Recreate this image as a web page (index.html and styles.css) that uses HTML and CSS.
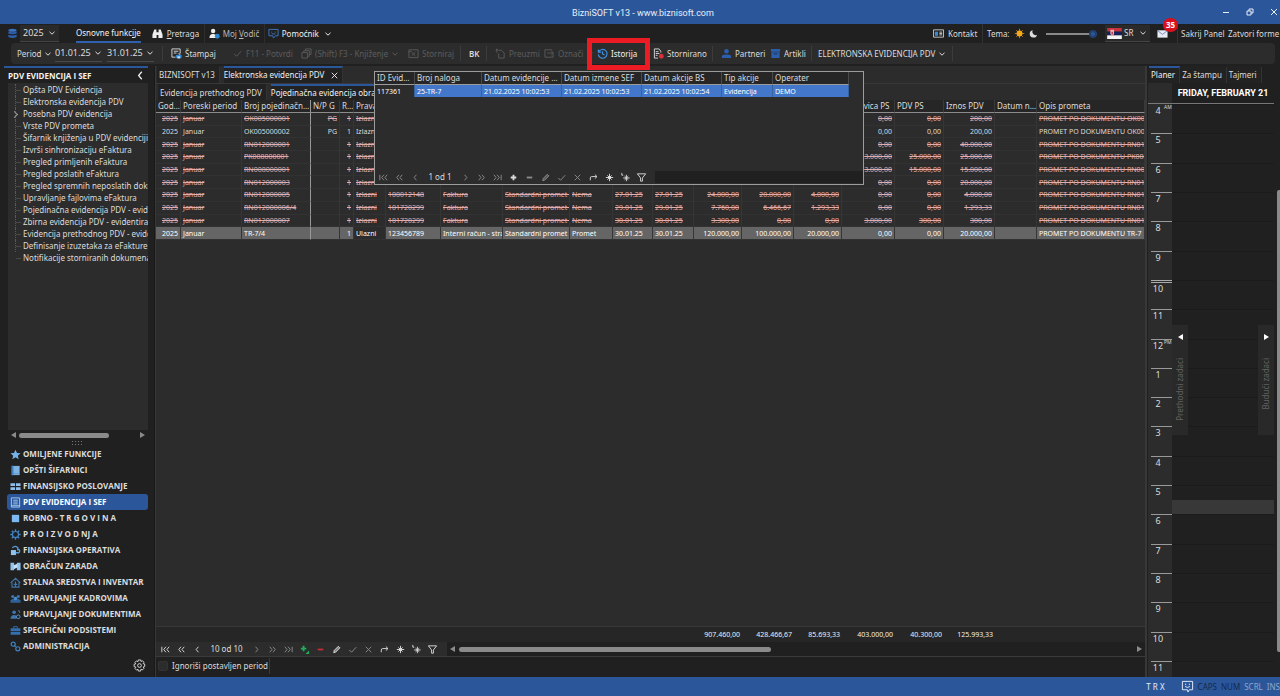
FILE: index.html
```html
<!DOCTYPE html>
<html lang="sr-Latn">
<head>
<meta charset="utf-8">
<title>BizniSOFT v13</title>
<link rel="stylesheet" href="styles.css">
</head>
<body>
<svg class="defs" aria-hidden="true">
  <symbol id="chev" viewBox="0 0 8 8"><path d="M1.500 2.800 4 5.200 6.500 2.800" class="ln"/></symbol>
  <symbol id="n-first" viewBox="0 0 12 12"><path d="M2 3v6M6.500 3 4 6l2.500 3M10 3 7.500 6 10 9" class="ln"/></symbol>
  <symbol id="n-pp" viewBox="0 0 12 12"><path d="M5.500 3 3 6l2.500 3M9 3 6.500 6 9 9" class="ln"/></symbol>
  <symbol id="n-prev" viewBox="0 0 12 12"><path d="M7 3 4.500 6 7 9" class="ln"/></symbol>
  <symbol id="n-next" viewBox="0 0 12 12"><path d="M5 3 7.500 6 5 9" class="ln"/></symbol>
  <symbol id="n-np" viewBox="0 0 12 12"><path d="M3 3 5.500 6 3 9M6.500 3 9 6 6.500 9" class="ln"/></symbol>
  <symbol id="n-last" viewBox="0 0 12 12"><path d="M2 3 4.500 6 2 9M5.500 3 8 6 5.500 9M10 3v6" class="ln"/></symbol>
  <symbol id="n-add" viewBox="0 0 12 12"><path d="M6 3v6M3 6h6" class="ln thick"/></symbol>
  <symbol id="n-add-green" viewBox="0 0 12 12"><path d="M5 2v6M2 5h6" class="ln thick"/><path d="M11 7v4H7z" fill="currentColor"/></symbol>
  <symbol id="n-del" viewBox="0 0 12 12"><path d="M3 6h6" class="ln thick"/></symbol>
  <symbol id="n-edit" viewBox="0 0 12 12"><path d="M3 9.500 3.500 7 8 2.500 9.700 4.200 5.200 8.800z" fill="currentColor" fill-opacity=".5" stroke="currentColor"/></symbol>
  <symbol id="n-ok" viewBox="0 0 12 12"><path d="M2.500 6.500 5 9l5-5.500" class="ln"/></symbol>
  <symbol id="n-x" viewBox="0 0 12 12"><path d="m3 3 6 6M9 3 3 9" class="ln"/></symbol>
  <symbol id="n-ref" viewBox="0 0 12 12"><path d="M2.500 9V6.500Q2.500 5 4 5h5.500M7.500 2.800 9.800 5 7.500 7.200" class="ln"/></symbol>
  <symbol id="n-star" viewBox="0 0 12 12"><path d="M6 2v8M2 6h8M3.700 3.700l4.600 4.600M8.300 3.700 3.700 8.300" class="ln"/><circle cx="6" cy="6" r="2" fill="currentColor"/></symbol>
  <symbol id="n-star2" viewBox="0 0 12 12"><path d="M7 3v7M3.500 6.500h7M5 4.500l4 4M9 4.500l-4 4M2 1v2.500h1.500" class="ln"/></symbol>
  <symbol id="n-filter" viewBox="0 0 12 12"><path d="M1.500 2h9L7 6.500V10H5V6.500z" class="ln"/></symbol>

  <symbol id="db" viewBox="0 0 12 12"><ellipse cx="6" cy="2.500" rx="4.500" ry="1.700" fill="#3a72c4"/><path d="M1.500 3.800q4.500 1.800 9 0V6q-4.500 1.800-9 0zM1.500 7.300q4.500 1.800 9 0v2.500q-4.500 2-9 0z" fill="#2b5fae"/></symbol>
  <symbol id="bino" viewBox="0 0 12 12"><path d="M2.500 1.500h2.300v3h2.400v-3h2.300L11.500 7v4H7V7.500H5V11H.5V7z" fill="#eee"/></symbol>
  <symbol id="guide" viewBox="0 0 12 12"><circle cx="4.500" cy="3.200" r="2.400" fill="#eee"/><path d="M.5 11c0-4 2-4.500 4-4.500S8 7 8 11z" fill="#eee"/><circle cx="9" cy="9" r="2.700" fill="#2f86d0"/></symbol>
  <symbol id="help" viewBox="0 0 12 12"><path d="M1 1.500h10v7H8L6 11 5 8.500H1z" fill="none" stroke="#3f7ac8"/><path d="M4 4v1M8 4v1M4 6.500h4" stroke="#3f7ac8"/></symbol>
  <symbol id="contact" viewBox="0 0 12 12"><path d="M.5 2h11v8H.5z" fill="none" stroke="#ccc"/><path d="M2 4h3.500v4.500H2z" fill="#3f86d0"/><path d="M7 4.500h3M7 6h3M7 7.500h3" stroke="#ccc"/></symbol>
  <symbol id="sun" viewBox="0 0 12 12"><circle cx="6" cy="6" r="3.200" fill="#f5a81c"/><path d="M6 .8v10.400M.8 6h10.400M2.400 2.400l7.200 7.200M9.600 2.400 2.400 9.600" stroke="#f5a81c" stroke-width=".7"/></symbol>
  <symbol id="moon" viewBox="0 0 12 12"><path d="M5 1.500A5 5 0 1 0 10.800 7.500 4.300 4.300 0 0 1 5 1.500z" fill="#ddd"/></symbol>
  <symbol id="flag" viewBox="0 0 16 12"><path fill="#c8313e" d="M0 0h16v4H0z"/><path fill="#14215c" d="M0 4h16v4H0z"/><path fill="#f4f4f4" d="M0 8h16v4H0z"/><path fill="#e8b7bb" d="M3.500 2h4v4.500l-2 2.500-2-2.500z"/><path fill="#c8313e" d="M4.700 4h1.600v3H4.700z"/></symbol>
  <symbol id="mail" viewBox="0 0 12 12"><path d="M.5 2.500h11v8H.5z" fill="#e8eaf4"/><path d="m.8 3 5.200 4 5.200-4" fill="none" stroke="#7488b8"/></symbol>

  <symbol id="print" viewBox="0 0 12 12"><path d="M1 1h9v5M1 1v9h4M3 3.500h5M3 5.500h3" class="ln"/><path d="M5.500 7.500h6V11h-6z" fill="#2f86d0"/><path d="M7 6h3v1.500M7 9h3v2.500H7z" fill="#bde" /></symbol>
  <symbol id="copy" viewBox="0 0 12 12"><path d="M1 5h6v6H1zM3 5V3h6v6H7M5 3V1h6v6H9" class="ln"/></symbol>
  <symbol id="storn" viewBox="0 0 12 12"><path d="M1 2h10v8.500H1zM1 4h3M4 4.500l4 4M8 4.500l-4 4" class="ln"/></symbol>
  <symbol id="take" viewBox="0 0 12 12"><path d="M2 1v4M4 2.500h3l3 3V11H4V6M1 3l1-2 1.500 2" class="ln"/></symbol>
  <symbol id="mark" viewBox="0 0 12 12"><path d="M9 2H1v8h9V7M3.500 5.500h6M8 3.500l2.500 2L8 7.500" class="ln"/></symbol>
  <symbol id="hist" viewBox="0 0 12 12"><path d="M1.500 1.500V4.500h3M1.800 4.300A4.800 4.800 0 1 1 1.400 7M6 3.500V6.500l2.200 1" fill="none" stroke="#3c8fe0" stroke-width="1.300"/></symbol>
  <symbol id="stdoc" viewBox="0 0 12 12"><path d="M8.500 5V3.500L6.500 1H1.500v10h4M3 4h3M3 6h4M3 8h2" class="ln"/><circle cx="9" cy="9" r="2.700" fill="#d8303a"/></symbol>
  <symbol id="person" viewBox="0 0 12 12"><circle cx="6" cy="3.500" r="2.500" fill="#2b5fae"/><path d="M1 11V8.500q1-1.500 5-1.500t5 1.500V11z" fill="#2b5fae"/></symbol>
  <symbol id="box" viewBox="0 0 12 12"><path d="M1 1h10v3H1zM1.500 4.500h9V11h-9z" fill="#2b5fae"/><path d="M4 6.500h4" stroke="#1c2c48"/></symbol>

  <symbol id="c-star" viewBox="0 0 12 12"><path d="m6 .8 1.600 3.600 3.900.3-3 2.600 1 3.900L6 9.100l-3.500 2.100 1-3.900-3-2.600 3.900-.3z" fill="#74b4ea"/></symbol>
  <symbol id="c-book" viewBox="0 0 12 12"><path d="M2 1h8.500v10H2z" fill="#7fb2e0"/><path d="M2 1h1.500v10H2zM3.500 9.500h7" fill="#3f7fc0" stroke="#4c86c0" stroke-width=".6"/></symbol>
  <symbol id="c-fin" viewBox="0 0 12 12"><path d="M.5 2.500h5v3h-5zM6.500 2.500h5v3h-5zM.5 6.700h5v3h-5zM6.500 6.700h5v3h-5z" fill="#8fbfe8"/></symbol>
  <symbol id="c-pdv" viewBox="0 0 12 12"><path d="M1.500 1h9v10h-9zM3.500 3.500h5M3.500 5.500h5M3.500 7.500h5M1.500 9.500h9" fill="none" stroke="#a9cdf2"/></symbol>
  <symbol id="c-sq" viewBox="0 0 12 12"><path d="M2 2h8v8H2z" fill="#7db9f0"/></symbol>
  <symbol id="c-gear" viewBox="0 0 12 12"><circle cx="6" cy="6" r="3.300" fill="none" stroke="#3f83c4" stroke-width="1.300"/><path d="M6 .3v2.200M6 9.500v2.200M.3 6h2.200M9.500 6h2.200M2 2l1.500 1.500M8.500 8.500 10 10M10 2 8.500 3.500M3.500 8.500 2 10" stroke="#3f83c4" stroke-width="1.500"/></symbol>
  <symbol id="c-op" viewBox="0 0 12 12"><path d="M1 5.500h5.500V11H1z" fill="#8fc2ec"/><path d="M2.500 3Q6 0 8.500 3v3M6.500 8.500h3q2-2 0-4" fill="none" stroke="#5e9fd8" stroke-width="1.500"/></symbol>
  <symbol id="c-pay" viewBox="0 0 12 12"><path d="M.5 2h4v8h-4zM7.500 2h4v8h-4z" fill="#8fc2ec"/><path d="M4 4.500 8 3v4l-4 2z" fill="#c4e0f6"/></symbol>
  <symbol id="c-home" viewBox="0 0 12 12"><path d="M.7 6.500 6 1.500l5.300 5M2.200 6v5h7.600V6M6 5v6M4 8h4" fill="none" stroke="#3f76ac" stroke-width="1.200"/></symbol>
  <symbol id="c-ppl" viewBox="0 0 12 12"><path d="M.5 10.500V8L2.500 6.500h7l2 1.500v2.500z" fill="#2e6198"/><circle cx="3" cy="3.800" r="1.700" fill="#3f76ac"/><circle cx="9" cy="3.800" r="1.700" fill="#3f76ac"/><circle cx="6" cy="6" r="1.900" fill="#4c8ccc"/></symbol>
  <symbol id="c-doc" viewBox="0 0 12 12"><circle cx="4.500" cy="3.500" r="2" fill="#3f76ac"/><path d="M.5 10.500Q1 6.500 4.500 6.500T7 10.500z" fill="#3f76ac"/><circle cx="9" cy="8.500" r="2" fill="none" stroke="#5a9ad8"/><path d="M8.500 2h2v2.500" fill="none" stroke="#3f76ac"/></symbol>
  <symbol id="c-case" viewBox="0 0 12 12"><path d="M.7 3.500h10.600v3H.7zM.7 7.300h10.600v3.200H.7z" fill="#3470b0"/><path d="M4 3.500V1.800h4v1.700" fill="none" stroke="#3470b0"/></symbol>
  <symbol id="c-adm" viewBox="0 0 12 12"><circle cx="3.500" cy="3.500" r="2.200" fill="none" stroke="#3f83c4" stroke-width="1.300"/><circle cx="8.500" cy="8.500" r="2.200" fill="none" stroke="#3f83c4" stroke-width="1.300"/><path d="m5 5 2 2" stroke="#3f83c4"/></symbol>
  <symbol id="gear" viewBox="0 0 14 14"><path d="M5.800 1h2.400l.4 1.700 1.500-.9 1.700 1.700-.9 1.500 1.700.4v2.800l-1.700.4.9 1.500-1.700 1.700-1.500-.9L8.200 13H5.800l-.4-1.900-1.500.9-1.700-1.700.9-1.500L1.200 8.200V5.600L3 5.200l-.9-1.500L3.800 2l1.500.9z" class="ln"/><circle cx="7" cy="7" r="2" class="ln"/></symbol>
  <symbol id="chat" viewBox="0 0 14 14"><path d="M1.500 1.500h11v9H9L7.500 13 7 10.500H1.500z" class="ln"/><path d="M5 4v1.500M9 4v1.500M4.500 7q2.500 2 5 0" class="ln"/></symbol>
</svg>

<header class="titlebar">
  <h1>BizniSOFT v13 - www.biznisoft.com</h1>
  <div class="winbtns">
    <button aria-label="Minimize"><svg viewBox="0 0 8 8"><path d="M1 4.500h6" class="ln"/></svg></button>
    <button aria-label="Restore"><svg viewBox="0 0 8 8"><path d="M1 3h4v4H1zM3 3V1h4v4H5" class="ln"/></svg></button>
    <button aria-label="Close"><svg viewBox="0 0 8 8"><path d="m1 1 6 6M7 1 1 7" class="ln"/></svg></button>
  </div>
</header>

<nav class="menubar">
  <svg class="ic"><use href="#db"/></svg>
  <button class="year">2025<svg class="cv"><use href="#chev"/></svg></button>
  <button class="current">Osnovne funkc<u>i</u>je</button>
  <button class="m-search"><svg class="ic"><use href="#bino"/></svg><span><u>P</u>retraga</span></button>
  <button class="m-guide"><svg class="ic"><use href="#guide"/></svg><span>Moj <u>V</u>odič</span></button>
  <button class="m-help"><svg class="ic"><use href="#help"/></svg><span>Pomoćnik</span><svg class="cv"><use href="#chev"/></svg></button>
  <span class="push"></span>
  <button class="m-contact"><svg class="ic"><use href="#contact"/></svg><span>Kontakt</span></button>
  <label class="m-theme" for="theme">Tema:<svg class="ic"><use href="#sun"/></svg><svg class="ic moon"><use href="#moon"/></svg></label>
  <input id="theme" type="range" min="0" max="1" value="1">
  <button class="lang"><svg class="flag"><use href="#flag"/></svg>SR<svg class="cv"><use href="#chev"/></svg></button>
  <button class="mail" aria-label="Poruke"><svg class="ic"><use href="#mail"/></svg><span class="badge">35</span></button>
  <button class="m-hide">Sakrij Panel</button>
  <button class="m-close">Zatvori forme</button>
</nav>

<div class="toolbar">
  <button class="t-period">Period<svg class="cv"><use href="#chev"/></svg></button>
  <button class="t-date">01.01.25<svg class="cv"><use href="#chev"/></svg></button>
  <button class="t-date">31.01.25<svg class="cv"><use href="#chev"/></svg></button>
  <i class="sep wide"></i>
  <button class="t-print"><svg class="ic"><use href="#print"/></svg>Štampaj</button>
  <button class="t-confirm" disabled><svg class="ic"><use href="#n-ok"/></svg>F11 - Potvrdi</button>
  <button class="t-book" disabled><svg class="ic"><use href="#copy"/></svg>(Shift) F3 - Knjiženje<svg class="cv"><use href="#chev"/></svg></button>
  <button class="t-storn" disabled><svg class="ic"><use href="#storn"/></svg>Storniraj</button>
  <i class="sep"></i>
  <button class="t-bk">BK</button>
  <i class="sep"></i>
  <button class="t-take" disabled><svg class="ic"><use href="#take"/></svg>Preuzmi</button>
  <button class="t-mark" disabled><svg class="ic"><use href="#mark"/></svg>Označi<svg class="cv"><use href="#chev"/></svg></button>
  <button class="t-hist"><svg class="ic"><use href="#hist"/></svg>Istorija<span class="highlight"></span></button>
  <button class="t-stdoc"><svg class="ic"><use href="#stdoc"/></svg>Stornirano</button>
  <i class="sep"></i>
  <button class="t-part"><svg class="ic"><use href="#person"/></svg>Partneri</button>
  <button class="t-art"><svg class="ic"><use href="#box"/></svg>Artikli</button>
  <i class="sep short"></i>
  <button class="t-evid">ELEKTRONSKA EVIDENCIJA PDV<svg class="cv"><use href="#chev"/></svg></button>
  <i class="sep"></i>
</div>

<div class="workspace">
  <aside class="side">
    <div class="side-head"><h2>PDV EVIDENCIJA I SEF</h2><button aria-label="Sakrij"><svg class="ic"><use href="#n-prev"/></svg></button></div>
    <ul class="tree">
      <li><a href="#">Opšta PDV Evidencija</a></li>
      <li><a href="#">Elektronska evidencija PDV</a></li>
      <li class="parent"><a href="#">Posebna PDV evidencija</a></li>
      <li><a href="#">Vrste PDV prometa</a></li>
      <li><a href="#">Šifarnik knjiženja u PDV evidenciji</a></li>
      <li><a href="#">Izvrši sinhronizaciju eFaktura</a></li>
      <li><a href="#">Pregled primljenih eFaktura</a></li>
      <li><a href="#">Pregled poslatih eFaktura</a></li>
      <li><a href="#">Pregled spremnih neposlatih dokumenata</a></li>
      <li><a href="#">Upravljanje fajlovima eFaktura</a></li>
      <li><a href="#">Pojedinačna evidencija PDV - evidentiranje</a></li>
      <li><a href="#">Zbirna evidencija PDV - evidentiranje</a></li>
      <li><a href="#">Evidencija prethodnog PDV - evidentiranje</a></li>
      <li><a href="#">Definisanje izuzetaka za eFakture</a></li>
      <li><a href="#">Notifikacije storniranih dokumenata</a></li>
    </ul>
    <div class="hscroll"><i class="arr left"></i><i class="thumb"></i><i class="arr right"></i></div>
    <div class="grip"></div>
    <nav class="groups">
      <a href="#"><svg class="ic"><use href="#c-star"/></svg>OMILJENE FUNKCIJE</a>
      <a href="#"><svg class="ic"><use href="#c-book"/></svg>OPŠTI ŠIFARNICI</a>
      <a href="#"><svg class="ic"><use href="#c-fin"/></svg>FINANSIJSKO POSLOVANJE</a>
      <a href="#" class="on"><svg class="ic"><use href="#c-pdv"/></svg>PDV EVIDENCIJA I SEF</a>
      <a href="#"><svg class="ic"><use href="#c-sq"/></svg>ROBNO - T R G O V I N A</a>
      <a href="#"><svg class="ic"><use href="#c-gear"/></svg>P R O I Z V O D NJ A</a>
      <a href="#"><svg class="ic"><use href="#c-op"/></svg>FINANSIJSKA OPERATIVA</a>
      <a href="#"><svg class="ic"><use href="#c-pay"/></svg>OBRAČUN ZARADA</a>
      <a href="#"><svg class="ic"><use href="#c-home"/></svg>STALNA SREDSTVA I INVENTAR</a>
      <a href="#"><svg class="ic"><use href="#c-ppl"/></svg>UPRAVLJANJE KADROVIMA</a>
      <a href="#"><svg class="ic"><use href="#c-doc"/></svg>UPRAVLJANJE DOKUMENTIMA</a>
      <a href="#"><svg class="ic"><use href="#c-case"/></svg>SPECIFIČNI PODSISTEMI</a>
      <a href="#"><svg class="ic"><use href="#c-adm"/></svg>ADMINISTRACIJA</a>
    </nav>
    <div class="side-foot"><button aria-label="Podešavanja"><svg class="gear"><use href="#gear"/></svg></button></div>
  </aside>

  <main class="center">
    <div class="tabs">
      <button>BIZNISOFT v13</button>
      <button class="on">Elektronska evidencija PDV<svg class="ic"><use href="#n-x"/></svg></button>
    </div>
    <div class="tabs sub">
      <button>Evidencija prethodnog PDV</button>
      <button class="on">Pojedinačna evidencija obračunatog PDV</button>
    </div>
    <div class="gridwrap">
      <table class="grid">
        <colgroup class="cols"></colgroup>
        <thead><tr><th>Godina</th><th>Poreski period</th><th>Broj pojedinačne evidencije</th><th>N/P G</th><th>R...</th><th>Pravac</th><th></th><th></th><th></th><th></th><th></th><th></th><th></th><th></th><th></th><th>Osnovica PS</th><th>PDV PS</th><th>Iznos PDV</th><th>Datum naloga</th><th>Opis prometa</th></tr></thead>
        <tbody id="rows"></tbody>
      </table>
    </div>
    <table class="grid totals">
      <colgroup class="cols"></colgroup>
      <tbody><tr><td colspan="12"></td><td>907.460,00</td><td>428.466,67</td><td>85.693,33</td><td>403.000,00</td><td>40.300,00</td><td>125.993,33</td><td colspan="2"></td></tr></tbody>
    </table>
    <div class="navrow">
      <div class="navigator" data-count="10 od 10" data-kind="main"></div>
      <div class="hscroll"><i class="arr left"></i><i class="thumb"></i><i class="arr right"></i></div>
    </div>
    <div class="optrow"><label for="ign"><input type="checkbox" id="ign">Ignoriši postavljen period</label></div>

    <section class="popup">
      <table class="hist">
        <colgroup><col class="h1"><col class="h2"><col class="h3"><col class="h3"><col class="h3"><col class="h4"><col></colgroup>
        <thead><tr><th>ID Evidencije</th><th>Broj naloga</th><th>Datum evidencije BS</th><th>Datum izmene SEF</th><th>Datum akcije BS</th><th>Tip akcije</th><th>Operater</th></tr></thead>
        <tbody><tr><td>117361</td><td>25-TR-7</td><td>21.02.2025 10:02:53</td><td>21.02.2025 10:02:53</td><td>21.02.2025 10:02:54</td><td>Evidencija</td><td>DEMO</td></tr></tbody>
      </table>
      <div class="navrow">
        <div class="navigator" data-count="1 od 1" data-kind="popup"></div>
        <div class="hscroll"></div>
      </div>
    </section>
  </main>

  <aside class="planner">
    <div class="tabs">
      <button class="on">Planer</button>
      <button>Za štampu</button>
      <button>Tajmeri</button>
    </div>
    <div class="cal">
      <div class="day">FRIDAY, FEBRUARY 21</div>
      <div class="hours" id="hours"></div>
      <button class="edge prev"><i class="arr left"></i><span>Prethodni zadaci</span></button>
      <button class="edge next"><i class="arr right"></i><span>Budući zadaci</span></button>
      <div class="vscroll"><i></i></div>
    </div>
  </aside>
</div>

<footer class="status">
  <span class="trx">T R X</span>
  <svg class="gear"><use href="#chat"/></svg>
  <span class="dark">CAPS</span><span class="dark">NUM</span><span>SCRL</span><span>INS</span>
</footer>
<script src="app.js"></script>
</body>
</html>
```
FILE: styles.css
```css
* { box-sizing: border-box; }
body {
  margin: 0; height: 100vh; overflow: hidden;
  display: flex; flex-direction: column;
  background: #202020; color: #dcdcdc;
  font: 8px/12px "Noto Sans", "Open Sans", sans-serif;
}
button { font: inherit; color: inherit; background: none; border: 0; padding: 0; margin: 0; display: flex; align-items: center; white-space: nowrap; text-align: left; }
a { color: inherit; text-decoration: none; }
h1, h2 { font: inherit; margin: 0; }
ul { list-style: none; margin: 0; padding: 0; }
svg { flex: none; }
.defs { position: absolute; width: 0; height: 0; }
.ln { fill: none; stroke: currentColor; stroke-width: 1; }
.thick { stroke-width: 2; }
.ic { width: 11px; height: 11px; }
.cv { width: 8px; height: 8px; }

.titlebar { flex: 0 0 24px; background: #2b579a; display: grid; grid-template-columns: 1fr auto 1fr; align-items: center; padding-left: 6px; color: #e8eef8; }
.titlebar h1 { grid-column: 2; font-family: Roboto, sans-serif; font-size: 9px; padding-top: 2px; }
.winbtns { justify-self: end; display: flex; gap: 16px; padding-right: 2px; }
.winbtns svg { width: 8px; height: 8px; }

.menubar { flex: 0 0 19px; display: flex; align-items: center; padding-left: 7px; }
.menubar button, .menubar label { height: 19px; gap: 4px; }
.menubar u { text-underline-offset: 1px; }
.menubar .year { width: 39px; height: 17px; margin-left: 2px; padding-left: 3px; justify-content: space-between; padding-right: 3px; background: #2a2a2a; border-bottom: 1px solid #444; font-size: 9px; }
.menubar .current { margin: 0 11px 0 17px; gap: 0; border-bottom: 2px solid #2f62ae; color: #f2f2f2; }
.menubar .m-search { width: 52px; }
.menubar .m-guide { width: 60px; padding-left: 4px; gap: 3px; border-left: 1px solid #2e2e2e; color: #b8b8b8; }
.menubar .m-help { padding-left: 3px; gap: 3px; border-left: 1px solid #2e2e2e; color: #f2f2f2; }
.m-help .cv { margin-left: 2px; }
.push { flex: 1; }
.m-contact { width: 49px; }
.m-theme { width: 64px; display: flex; align-items: center; padding-left: 4px; border-left: 1px solid #333; }
.m-theme .moon { width: 9px; height: 9px; }
#theme { appearance: none; width: 51px; height: 8px; margin: 0 8px 0 0; background: linear-gradient(#8a8a8a, #8a8a8a) center / 100% 2px no-repeat; }
#theme::-webkit-slider-thumb { appearance: none; width: 8px; height: 8px; border-radius: 50%; background: #2b579a; border: 2px solid #22406e; }
.menubar .lang { width: 45px; height: 17px; gap: 2px; padding: 0 3px 0 2px; background: #2a2a2a; border-bottom: 1px solid #444; }
.lang .cv { margin-left: auto; }
.flag { width: 15px; height: 11px; }
.mail { position: relative; width: 27px; padding-left: 7px; }
.badge { position: absolute; left: 13px; top: -6px; width: 15px; height: 14px; border-radius: 7px; background: #d8101c; color: #fff; font: bold 8px/14px "Open Sans", sans-serif; text-align: center; }
.m-hide { width: 51px; padding-left: 3px; border-left: 1px solid #333; }
.m-close { width: 52px; }

.toolbar { flex: 0 0 21px; margin: 0 5px 0 11px; padding-left: 6px; background: #2c2c2c; border-radius: 4px; display: flex; align-items: center; }
.toolbar button { height: 16px; flex: none; gap: 3px; }
.toolbar button:disabled { color: #5c5c5c; }
.toolbar .t-period { width: 38px; }
.toolbar .t-date { width: 47px; margin-right: 5px; border-bottom: 1px solid #4a4a4a; font-size: 9px; }
.sep { flex: 0 0 9px; height: 15px; border-left: 1px solid #3c3c3c; }
.sep.wide { margin-left: 3px; }
.sep.short { flex-basis: 7px; }
.t-print { width: 61px; }
.t-confirm { width: 69px; }
.t-book { width: 107px; }
.t-storn { width: 52px; }
.t-bk { width: 17px; font-weight: 600; }
.t-take { width: 49px; }
.t-mark { width: 53px; }
.t-hist { width: 56px; position: relative; color: #f2f2f2; }
.highlight { position: absolute; left: -10px; top: -8px; width: 63px; height: 32px; border: 5px solid #ed1c24; z-index: 5; }
.t-stdoc { width: 59px; }
.t-part { width: 49px; }
.t-art { width: 41px; }
.t-evid { width: 134px; }

.workspace { flex: 1; min-height: 0; display: grid; grid-template-columns: 155px minmax(0, 1fr) 133px; padding-top: 2px; }
.side { display: flex; flex-direction: column; min-height: 0; padding: 0 6px 0 4px; border-right: 1px solid #191919; }
.side-head { flex: 0 0 17px; display: flex; align-items: center; justify-content: space-between; padding-left: 4px; border-top: 2px solid #2b579a; color: #f2f2f2; font-family: "Open Sans", sans-serif; font-weight: bold; }
.side-head .ic { width: 15px; height: 15px; }
.tree { flex: 1; min-height: 0; margin-left: 4px; background: #2c2c2c; overflow: hidden; padding-top: 1px; }
.tree li { height: 12px; margin-left: 7px; padding-left: 7px; white-space: nowrap; border-left: 1px dotted #5a5a5a; background: linear-gradient(#484848, #484848) 0 6px / 5px 1px no-repeat; }
.tree li:last-child { border-color: transparent; }
.tree .parent { position: relative; background: none; }
.tree .parent::before { content: ""; position: absolute; left: -4px; top: 4px; width: 4px; height: 4px; border: solid #999; border-width: 1px 1px 0 0; transform: rotate(45deg); }
.hscroll { display: flex; align-items: center; height: 10px; }
.arr { width: 0; height: 0; border: 3px solid transparent; }
.arr.left { border-left: 0; border-right: 5px solid #8a8a8a; }
.arr.right { border-right: 0; border-left: 5px solid #8a8a8a; }
.thumb { height: 5px; border-radius: 3px; background: #8a8a8a; }
.side .hscroll { margin-left: 4px; padding: 0 3px; }
.side .thumb { flex: 0 0 90px; margin: 0 auto 0 3px; }
.grip { flex: 0 0 6px; align-self: center; width: 11px; background: radial-gradient(circle, #999 40%, transparent 45%) 0 0 / 3px 3px; opacity: .7; }
.groups { margin-left: 3px; }
.groups a { display: flex; align-items: center; gap: 2px; height: 16px; padding-left: 3px; border-radius: 3px; font-family: "Open Sans", sans-serif; font-weight: bold; white-space: nowrap; }
.groups .on { background: #2b579a; color: #fff; }
.side-foot { flex: 0 0 23px; display: flex; align-items: center; justify-content: flex-end; padding-right: 2px; }
.gear { width: 13px; height: 13px; }

.tabs { display: flex; flex: 0 0 17px; padding-left: 1px; }
.tabs button { height: 17px; padding: 0 4px 1px 2px; background: #222; border-right: 1px solid #333; border-top: 2px solid transparent; }
.tabs .on { border-top-color: #2b579a; color: #f0f0f0; }
.center { position: relative; min-width: 0; display: flex; flex-direction: column; background: #2c2c2c; border-left: 1px solid #383838; border-right: 2px solid #383838; }
.center .tabs .on { margin-left: 4px; padding: 0 2px 1px 0; }
.center .tabs .ic { margin-left: 5px; }
.center .sub { flex-basis: 17px; border-top: 1px solid #383838; padding-left: 2px; }
.center .sub button { height: 16px; }
.gridwrap { flex: 1; min-height: 0; overflow: hidden; }
.grid { width: 100%; table-layout: fixed; border-collapse: separate; border-spacing: 0; font-size: 7px; }
.grid:not(.totals) { height: 140px; }
.grid th, .grid td, .hist th, .hist td { padding: 0 2px; overflow: hidden; white-space: nowrap; text-overflow: clip; line-height: 11px; text-align: left; }
.grid th { height: 13px; padding: 0 0 1px 2px; line-height: 10px; font-size: 8px; font-weight: normal; text-overflow: ellipsis; background: #262626; border-right: 1px solid #3a3a3a; border-bottom: 1px solid #8c8c8c; }
.grid td { border-right: 1px solid #363636; border-bottom: 1px solid #323232; }
.grid tbody .r { text-align: right; }
.grid tbody td:nth-child(3), .grid th:nth-child(3) { border-right-color: #999; }
.grid .void td { color: #e4adad; text-decoration: line-through; }
.grid .sel td { background: #656565; color: #fff; }
.grid .sel .cursor { background: #2c2c2c; }
.totals { flex: none; font-size: 7px; border-top: 1px solid #383838; background: #262626; }
.totals td { height: 15px; text-align: right; border: 0; color: #f0f0f0; }
.navrow { display: flex; flex: 0 0 14px; }
.navigator { display: flex; align-items: center; }
.navigator button { width: 16px; height: 14px; justify-content: center; }
.navigator svg { width: 11px; height: 11px; }
.navigator .count { text-align: center; width: 43px; }
.center > .navrow .navigator { padding-left: 1px; }
.center > .navrow .hscroll { flex: 1; height: 14px; margin-left: 7px; padding: 0 3px; background: #202020; }
.center > .navrow .thumb { flex: 0 1 312px; margin: 0 auto 0 4px; }
.green { color: #1fae5a; }
.red { color: #c03038; }
.dim { color: #8c8c8c; }
.optrow { flex: 0 0 21px; padding-bottom: 2px; background: #202020; border-top: 1px solid #3a3a3a; display: flex; align-items: center; }
.optrow label { display: flex; align-items: center; gap: 4px; padding: 2px 1px 2px 2px; border-right: 1px solid #3a3a3a; }
.optrow input { appearance: none; width: 10px; height: 10px; margin: 0; background: #2c2c2c; border: 1px solid #333; border-radius: 2px; }

.popup { position: absolute; left: 218px; top: 5px; width: 490px; height: 114px; display: flex; flex-direction: column; justify-content: space-between; background: #2c2c2c; border: 1px solid #9c9c9c; }
.hist { width: 474px; table-layout: fixed; border-collapse: separate; border-spacing: 0; }
.hist th { height: 13px; padding-bottom: 1px; font-weight: normal; text-overflow: ellipsis; border-right: 1px solid #4a4a4a; border-bottom: 1px solid #9c9c9c; background: #262626; }
.hist td { height: 12px; font-size: 7px; background: #4377c9; color: #fff; border-right: 1px solid #35619f; }
.hist td:first-child { background: #2c2c2c; }
.h1 { width: 40px; } .h2 { width: 67px; } .h3 { width: 80px; } .h4 { width: 51px; }
.popup .count { width: 34px; }
.popup .hscroll { flex: 1; height: 12px; margin: 1px 0 0 6px; background: #202020; }

.planner { display: flex; flex-direction: column; min-width: 0; padding-left: 1px; background: #202020; }
.cal { flex: 1; min-height: 0; position: relative; display: flex; flex-direction: column; padding-right: 6px; background: linear-gradient(90deg, #2c2c2c 24px, transparent 24px); }
.day { flex: 0 0 19px; margin-left: 24px; text-align: center; font: bold 9px/20px Roboto, sans-serif; color: #fff; white-space: nowrap; }
.hours { flex: 1; min-height: 0; display: flex; flex-direction: column; border-top: 1px solid #777; }
.hour { flex: 20; min-height: 0; overflow: hidden; display: grid; grid-template-columns: 24px 1fr; }
.hour:last-child { flex: 11; }
.hour > span { display: flex; align-items: flex-start; margin-left: 3px; border-top: 1px solid #999; font-size: 9px; }
.hour:first-child > span { border-top-color: transparent; }
.hour b { flex: none; width: 13px; padding-left: 1px; text-align: center; font-weight: normal; }
.hour sup { font-size: 5px; line-height: 5px; }
.hour.now > span { border-top: 3px double #aaa; }
.slots { display: grid; grid-template-rows: 1fr 1fr; border-top: 1px solid #1b1b1b; }
.slots .picked { background: #383838; }
.edge { position: absolute; top: 242px; width: 16px; height: 110px; background: #292929; flex-direction: column; gap: 18px; padding-top: 9px; color: #626262; }
.edge.prev { left: 24px; }
.edge.next { right: 6px; }
.edge span { writing-mode: vertical-rl; transform: rotate(180deg); }
.edge .arr.left { border-right-color: #fff; }
.edge .arr.right { border-left-color: #fff; }
.vscroll { position: absolute; right: 0; top: 107px; bottom: 25px; width: 3px; }
.vscroll i { display: block; height: 100%; border-radius: 2px 0 0 2px; background: #8a8a8a; }

.status { flex: 0 0 19px; display: flex; align-items: center; justify-content: flex-end; gap: 4px; background: #2b579a; color: #8fa5c8; white-space: nowrap; overflow: hidden; }
.status .trx { color: #e8eef8; margin-right: 12px; }
.status .gear { color: #e8eef8; }
.status .dark { color: #14294c; }
```
FILE: app.js
```js
const widths = [25, 61, 69, 29, 14, 32, 55, 62, 67, 43, 40, 41, 48, 52, 48, 53, 49, 51, 42, 0];
document.querySelectorAll('.cols').forEach(g => {
  g.innerHTML = widths.map(w => w ? `<col width="${w}">` : '<col>').join('');
});

const std = 'Standardni promet - osnovni';
const rows = [
  ['OK005000001', 'PG', 'Izlazni', '', '', '', '', '', '', '', '', '', '0,00', '0,00', '200,00', 'OK005000001'],
  ['OK005000002', 'PG', 'Izlazni', '', '', '', '', '', '', '', '', '', '0,00', '0,00', '200,00', 'OK005000002'],
  ['RN012000001', '', 'Izlazni', '', '', '', '', '', '', '', '', '', '0,00', '0,00', '40.000,00', 'RN012000001'],
  ['PK008000001', '', 'Izlazni', '', '', '', '', '', '', '', '', '', '3.000,00', '25.000,00', '25.000,00', 'PK008000001'],
  ['RN008000001', '', 'Izlazni', '', '', '', '', '', '', '', '', '', '3.000,00', '15.000,00', '15.000,00', 'RN008000001'],
  ['RN012000003', '', 'Izlazni', '', '', '', '', '', '', '', '', '', '0,00', '0,00', '20.000,00', 'RN012000003'],
  ['RN012000005', '', 'Izlazni', '100012148', 'Faktura', std, 'Nema', '27.01.25', '27.01.25', '24.000,00', '20.000,00', '4.000,00', '0,00', '0,00', '4.000,00', 'RN012000005'],
  ['RN012000006/4', '', 'Izlazni', '101720299', 'Faktura', std, 'Nema', '29.01.25', '29.01.25', '7.760,00', '6.466,67', '1.293,33', '0,00', '0,00', '1.293,33', 'RN012000006'],
  ['RN012000007', '', 'Izlazni', '101720299', 'Faktura', std, 'Nema', '30.01.25', '30.01.25', '3.300,00', '0,00', '0,00', '3.000,00', '300,00', '300,00', 'RN012000007'],
  ['TR-7/4', '', 'Ulazni', '123456789', 'Interni račun - stranac', 'Standardni promet bez', 'Promet', '30.01.25', '30.01.25', '120.000,00', '100.000,00', '20.000,00', '0,00', '0,00', '20.000,00', 'TR-7'],
];
document.getElementById('rows').innerHTML = rows.map((r, i) => {
  const cls = i === 9 ? 'sel' : i === 1 ? '' : 'void';
  const cells = ['2025', 'Januar', r[0], r[1], '1', ...r.slice(2, 15), '', 'PROMET PO DOKUMENTU ' + r[15]];
  return `<tr class="${cls}">` + cells.map((c, k) => {
    const right = [0, 3, 4].includes(k) || (k >= 12 && k <= 17);
    const cursor = i === 9 && k === 5;
    return `<td class="${right ? 'r' : ''}${cursor ? ' cursor' : ''}">${c}</td>`;
  }).join('') + '</tr>';
}).join('');

document.querySelectorAll('.navigator').forEach(n => {
  const main = n.dataset.kind === 'main';
  const b = (id, c = '') => `<button aria-label="${id}" class="${c}"><svg><use href="#n-${id}"/></svg></button>`;
  const d = main ? '' : 'dim';
  n.innerHTML = b('first', d) + b('pp', d) + b('prev', d) + `<span class="count">${n.dataset.count}</span>` +
    b('next', 'dim') + b('np', 'dim') + b('last', 'dim') +
    (main ? b('add-green', 'green') + b('del', 'red') + b('edit') : b('add') + b('del', 'dim') + b('edit', 'dim')) +
    b('ok', 'dim') + b('x', 'dim') + b('ref') + b('star') + b('star2') + b('filter');
});

const names = [4, 5, 6, 7, 8, 9, 10, 11, 12, 1, 2, 3, 4, 5, 6, 7, 8, 9, 10, 11];
document.getElementById('hours').innerHTML = names.map((h, i) => {
  const sup = i === 0 ? '<sup>AM</sup>' : i === 8 ? '<sup>PM</sup>' : '';
  return `<div class="hour${i === 6 ? ' now' : ''}"><span><b>${h}</b>${sup}</span><div class="slots"><i></i><i class="${i === 13 ? 'picked' : ''}"></i></div></div>`;
}).join('');
```
